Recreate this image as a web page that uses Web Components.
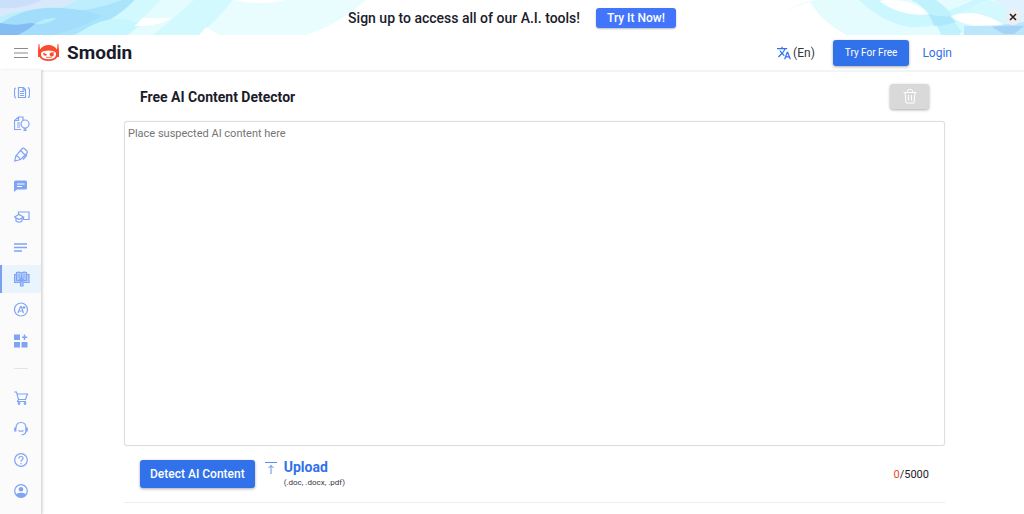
<!DOCTYPE html>
<html lang="en">
<head>
<meta charset="utf-8">
<meta name="viewport" content="width=device-width, initial-scale=1">
<title>Free AI Content Detector</title>
<style>
body {
  margin: 0;
  background: #fff;
  color: #1b1c2b;
  font-family: Roboto, "Liberation Sans", sans-serif;
  --blue: #3171ea;
  --icon: #7fa4f6;
}
</style>
</head>
<body>
<smodin-app>
  <promo-banner slot="banner">Sign up to access all of our A.I. tools!</promo-banner>
  <site-header slot="header">Smodin</site-header>
  <side-nav slot="nav"></side-nav>
  <content-detector>Free AI Content Detector</content-detector>
</smodin-app>

<script>
const define = (name, html, setup) => {
    const template = document.createElement("template");
    template.innerHTML = html;

    customElements.define(name, class extends HTMLElement {
        constructor() {
            super();
            this.attachShadow({ mode: "open" });
            this.shadowRoot.appendChild(template.content.cloneNode(true));
            if (setup) {
                setup(this.shadowRoot, this);
            }
        }
    });
};

define("smodin-app", `\
<style>
:host { display: flex; flex-direction: column; min-height: 100vh; }
.body { display: flex; flex: 1; }
main { display: flex; flex: 1; min-width: 0; border-top: 2px solid #f4f4f5; }
</style>
<slot name="banner"></slot>
<slot name="header"></slot>
<div class="body">
  <slot name="nav"></slot>
  <main><slot></slot></main>
</div>
`);

define("promo-banner", `\
<style>
:host {
  display: flex;
  align-items: center;
  justify-content: center;
  gap: 16px;
  height: 35px;
  position: relative;
  font-size: 14px;
  font-weight: 500;
  background: #fff;
}
.art { position: absolute; top: 0; height: 100%; z-index: 0; }
.left { left: 0; }
.right { right: 0; }
span { position: relative; }
a {
  position: relative;
  padding: 0 11px;
  border-radius: 3px;
  background: #4275fb;
  color: #fff;
  font-size: 12px;
  line-height: 20px;
  text-decoration: none;
  box-shadow: 0 1px 2px #0004;
}
button {
  position: absolute;
  right: 3px;
  top: 9px;
  display: flex;
  align-items: center;
  justify-content: center;
  width: 16px;
  height: 16px;
  padding: 0;
  border: 0;
  border-radius: 50%;
  background: #eeeef1;
}
</style>
<svg class="art left" width="366" height="35" viewBox="0 0 366 35" aria-hidden="true">
  <path fill="#e9fdff" d="M0 0h366q-30 26-60 35H0z"/>
  <path fill="#d2f9fe" d="M0 0h233q-16 20-34 35H0z"/>
  <path fill="#e5fcff" d="M160 0h34q-22 20-41 35H125q20-18 35-35z"/>
  <path fill="#bdeefd" d="M0 0h135q-20 22-60 35H0z"/>
  <path fill="#d7e9fb" d="M0 0h78q-12 8-30 9Q20 9 0 17z"/>
  <path fill="#cbdffa" d="M0 0h42q-20 10-42 8z"/>
  <path fill="#a9e4fc" d="M60 12q34-1 62-12h12q-22 24-62 35H28z"/>
  <path fill="#a2ddfb" d="M0 24q25-18 60-16 25 1 42 8-20 12-50 19H0z"/>
  <path fill="#84bcf4" d="M0 23q15 3 24 1 9-2 11 0-8 7-17 11H0z"/>
  <path fill="#b8edfd" d="M35 24q10-7 22-6-10 7-22 6z"/>
  <path fill="#c8f6fe" d="M80 32q20-14 40-13 14 1 20 6l-12 10H75z"/>
  <path fill="#fff" d="M142 18h29q-10 8-37 8 5-3 8-8z"/>
  <path fill="#fff" d="M199 35q4-4 7-8l13 8zM233 0h53q-23 6-53 0z"/>
</svg>
<svg class="art right" width="250" height="35" viewBox="0 0 250 35" aria-hidden="true">
  <path fill="#e5fcff" d="M12 11Q24 3 42 0h208v35H72Q46 20 36 2 24 5 12 11z"/>
  <path fill="#ccf7fe" d="M85 0h22q20 14 42 15 24-1 50-15h18q-18 5-35 17-22 12-48 10Q108 22 85 0z"/>
  <path fill="#c0f2fd" d="M137 0h25q10 7 17 16 7 8 14 10l-8 9h-18q-9-25-30-35z"/>
  <path fill="#d3f9fe" d="M176 16q18-6 40-16l34 14v21h-60q-7-10-14-19z"/>
  <path fill="#fff" d="M105 1q10-2 25 0 18 4 23 13-26 3-48-13zM177 16q24-8 48 6 10 5-5 4-30 2-43-10z"/>
  <path fill="#a5e4fc" d="M154 14q10 3 22 2l6 6q-12 4-22 4-2-6-6-12z" opacity=".7"/>
  <path fill="#dff2fd" d="M220 0h30v20q-16-10-30-20z"/>
  <path fill="#aedcfb" d="M190 26q20 0 35-1l25-3v13h-60z" opacity=".65"/>
  <path fill="#9bcaf7" d="M218 27q14-2 32-1l-10 8h-10z" opacity=".7"/>
</svg>
<span><slot></slot></span>
<a href="#signup">Try It Now!</a>
<button aria-label="Close">
  <svg width="8" height="8" viewBox="0 0 8 8" stroke="#222" stroke-width="1.6"><path d="M1 1l6 6M7 1L1 7"/></svg>
</button>
`);

define("site-header", `\
<style>
:host {
  display: flex;
  align-items: center;
  height: 35px;
  padding: 0 72px 0 14px;
  background: #fff;
}
svg { display: block; }
button { padding: 0; border: 0; background: none; cursor: pointer; }
.logo {
  display: flex;
  align-items: center;
  gap: 8px;
  margin: 0 auto 0 10px;
  color: inherit;
  font-size: 19px;
  font-weight: 700;
  text-decoration: none;
}
.lang {
  display: flex;
  align-items: center;
  gap: 2px;
  margin-right: 18px;
  color: #33363f;
  font-family: inherit;
  font-size: 12px;
}
.try {
  margin-right: 13px;
  padding: 0 12px;
  border-radius: 3px;
  background: var(--blue);
  color: #fff;
  font-size: 10px;
  line-height: 26px;
  text-decoration: none;
  box-shadow: 0 1px 3px #0005;
}
.login { color: var(--blue); font-size: 12px; text-decoration: none; }
</style>
<button aria-label="Menu">
  <svg width="14" height="12" viewBox="0 0 14 12" stroke="#8b8b8b"><path d="M0 1.5h14M0 6h14M0 10.5h14"/></svg>
</button>
<a class="logo" href="#home">
  <svg width="21" height="17" viewBox="0 0 21 17">
    <path fill="#fb4a2c" d="M0 7L.6 0h.8L2 5.500Q5 1 10.500 1T19 5.500L19.600 0h.8L21 7v6h-1.600Q17 17 10.500 17T1.600 13H0z"/>
    <path fill="#fff" d="M3 9.500Q3.500 7 6.500 7q4-.8 8 0Q17.500 7 18 9.500 18.300 13 15 14.500q-4.500 1.500-9 0Q2.700 13 3 9.500z"/>
    <path fill="#fb4a2c" d="M5 8.500l4 2q-.7 1.500-2.300 1.100Q5.200 11 5 8.500z"/>
    <circle cx="13.800" cy="10.400" r="2" fill="#fb4a2c"/>
    <path d="M11.500 10.200L16.500 7.800M8 13.200q3 .6 6-.2" fill="none" stroke="#fb4a2c" stroke-width=".8"/>
  </svg>
  <slot></slot>
</a>
<button class="lang" aria-label="Language">
  <svg width="14" height="14" viewBox="1 1 22 22" fill="#3171ea"><path d="M12.870 15.070l-2.540-2.510.03-.03A17.520 17.520 0 0 0 14.070 6H17V4h-7V2H8v2H1v2h11.170C11.500 7.920 10.440 9.750 9 11.350 8.070 10.320 7.300 9.190 6.690 8h-2c.73 1.630 1.730 3.170 2.980 4.560l-5.090 5.020L4 19l5-5 3.110 3.110.76-2.040zM18.500 10h-2L12 22h2l1.120-3h4.750L21 22h2l-4.500-12zm-2.620 7l1.620-4.330L19.120 17h-3.240z"/></svg>
  <span>(En)</span>
</button>
<a class="try" href="#signup">Try For Free</a>
<a class="login" href="#login">Login</a>
`);

// 16x16 line icons, stroked with currentColor
const icons = {
    rewrite: `<path d="M4.500 2.500h5l2 2v8h-7zM9 2.500V5h2.500M6 6.500h4M6 8.500h4M6 10.500h4M2 3Q.5 3 .5 5v5q0 2.500 1.500 2.500L1 13M14 12.500q1.500 0 1.500-2.500V5q0-2-1.500-2l1-.5"/>`,
    plagiarism: `<path d="M7 13.500H.5v-9L4.500 1H9v3M4.500 1v3.500H.5M3 7h3M3 9h3M3 11h3"/><circle cx="11" cy="8" r="4"/><path d="M10.200 12V14.500h1.600v-2.500"/>`,
    writer: `<path d="M.8 14l1-5 6-7q1.200-1.300 2.500-.5L13 4q.8 1.200-.2 2.500L6.500 12.500zM6.500 3.500l4.500 4.500M2 9q3 0 4 4M9 12.500l4-4.500"/>`,
    chat: `<path fill="currentColor" stroke="none" d="M1.500 2.500h10q1.500 0 1.500 1.500v6q0 1.500-1.500 1.500H3L0 14V4q0-1.500 1.500-1.500z"/><path d="M3 6h7.500M3 8.500h5" stroke="#fff"/>`,
    tutor: `<path d="M4.500 6V3H15v7.500H9.500M.5 8l4.500-2.500L9.500 8 5 10.500zM2 9v3q3 2.500 6 0V9M9.500 8v3"/>`,
    summary: `<path d="M0 4h13M0 7.500h13M0 11h8" stroke-width="1.600"/>`,
    detector: `<path fill="currentColor" fill-opacity=".45" d="M.5 3.500h2v-2q3-1 5 .8 2-1.800 5-.8v2h2.500v8H10L9 12v3H6.500v-3l-1-.5h-5z"/><path d="M7.500 3.500v8M2.500 3.500v6q3-.5 5 1.500M12.500 3.500v6q-3-.5-5 1.500M4 4h2M4 6h2M9 4h2M9 6h2M5.500 8.500l2-2 2 2-2 2z"/>`,
    grader: `<circle cx="7" cy="7.500" r="6.500"/><path d="M4 11l2.500-6.500h.8L9.500 11M4.800 9h4M10 4v3M8.500 5.500h3"/>`,
    apps: `<path fill="currentColor" stroke="none" d="M0 1.500h6v5.500H0zM0 9h6v5.500H0zM7.500 9h6v5.500h-6z"/><path d="M10.500 1.500v5.500M8 4.200h5.200" stroke-width="1.500"/>`,
    cart: `<path d="M0 2h2.500l2 7.500h7L13.500 4H3M4.500 9.500l-1 2H12"/><circle cx="5" cy="13.500" r=".8"/><circle cx="11" cy="13.500" r=".8"/>`,
    support: `<path d="M2 7Q2 1.500 7 1.500T12 7v2.500Q12 13.500 7.500 14M4.500 9.500Q7 11 9.500 9.500"/><path d="M1.300 6.500v4M12.700 6.500v4" stroke-width="2.200"/>`,
    help: `<circle cx="7" cy="8" r="6.300"/><path d="M5 6.500q0-2 2-2t2 1.800Q9 7.500 7.600 8.200 7 8.500 7 9.700M7 11v1.200"/>`,
    account: `<circle cx="7" cy="8" r="6.300"/><circle cx="7" cy="6.200" r="2.300" fill="currentColor" stroke="none"/><path fill="currentColor" stroke="none" d="M2 11Q7 8.300 12 11 10.500 14.500 7 14.500T2 11z"/>`,
};

define("side-nav", `\
<style>
:host {
  display: block;
  box-sizing: border-box;
  width: 42px;
  background: #fbfbfc;
  border-right: 1px solid #dcdcdc;
  box-shadow: 1px 0 2px #0002;
  z-index: 1;
}
nav { display: flex; flex-direction: column; gap: 3px; padding-top: 9px; }
hr { width: 14px; margin: 10px 14px 12px; border: 0; border-top: 1px solid #e4e4e4; }
</style>
<nav></nav>
`, (root) => {
    const nav = root.querySelector("nav");
    const groups = [
        ["rewrite", "plagiarism", "writer", "chat", "tutor", "summary", "detector", "grader", "apps"],
        ["cart", "support", "help", "account"],
    ];
    groups.forEach((group, i) => {
        if (i > 0) {
            nav.append(document.createElement("hr"));
        }
        for (const name of group) {
            const item = document.createElement("nav-item");
            item.setAttribute("icon", name);
            item.toggleAttribute("active", name === "detector");
            nav.append(item);
        }
    });
});

class NavItem extends HTMLElement {
    constructor() {
        super();
        this.attachShadow({ mode: "open" });
    }

    connectedCallback() {
        const name = this.getAttribute("icon");
        this.shadowRoot.innerHTML = `\
        <style>
        :host { display: block; }
        a {
          display: flex;
          align-items: center;
          box-sizing: border-box;
          height: 28px;
          padding-left: 12px;
          border-left: 2px solid transparent;
          color: var(--icon);
        }
        :host([active]) a { border-color: #7c9ff2; background: #eaf4fd; }
        svg { fill: none; stroke: currentColor; stroke-width: 1.2; }
        </style>
        <a href="#${name}" aria-label="${name}">
          <svg width="16" height="16" viewBox="0 0 16 16">${icons[name]}</svg>
        </a>
        `;
    }
}

customElements.define("nav-item", NavItem);

define("content-detector", `\
<style>
:host {
  display: flex;
  flex: 1;
  flex-direction: column;
  min-width: 0;
  padding: 0 79px 11px 82px;
}
.bar { display: flex; align-items: center; padding: 0 16px; }
.top { height: 49px; }
.bottom { height: 56px; border-bottom: 1px solid #eee; }
h1 { margin: 0 auto 0 0; font-size: 14px; font-weight: 700; }
button { border: 0; border-radius: 3px; font-family: inherit; box-shadow: 0 1px 3px #0005; }
.clear {
  display: flex;
  align-items: center;
  justify-content: center;
  width: 39px;
  height: 25px;
  background: #d9d9d9;
}
textarea {
  flex: 1;
  box-sizing: border-box;
  width: 100%;
  min-height: 160px;
  padding: 4px 3px;
  border: 1px solid #dedede;
  border-radius: 3px;
  outline: 0;
  resize: none;
  color: inherit;
  font-family: inherit;
  font-size: 11px;
  line-height: 16px;
  box-shadow: 0 0 1px #0002;
}
textarea::placeholder { color: #757575; }
.detect {
  height: 28px;
  padding: 0 10px;
  background: var(--blue);
  color: #fff;
  font-size: 12px;
  font-weight: 500;
}
.upload {
  display: flex;
  gap: 7px;
  margin: 0 auto 0 10px;
  color: var(--blue);
  text-decoration: none;
}
.upload svg { margin-top: 4px; }
.upload b { display: block; font-size: 14px; line-height: 18px; }
.upload small { display: block; color: #33363f; font-size: 8px; line-height: 14px; }
.count { font-size: 11px; }
.count span { color: #f0432c; }
</style>
<div class="bar top">
  <h1><slot></slot></h1>
  <button class="clear" aria-label="Clear text" disabled>
    <svg width="14" height="15" viewBox="0 0 14 15" fill="none" stroke="#fff"><path d="M.5 3.500h13M2 3.500l1 10.500h8l1-10.500M4.500 3V1.500L6 .5h2l1.500 1V3M5.500 6v5.500M8.500 6v5.500"/></svg>
  </button>
</div>
<textarea aria-label="Content" placeholder="Place suspected AI content here"></textarea>
<div class="bar bottom">
  <button class="detect">Detect AI Content</button>
  <a class="upload" href="#upload">
    <svg width="12" height="12" viewBox="0 0 12 12" fill="none" stroke="#3171ea" stroke-width=".8"><path d="M0 .5h12M6 12V3.500M3.500 6L6 3.500 8.500 6"/></svg>
    <span><b>Upload</b><small>(.doc, .docx, .pdf)</small></span>
  </a>
  <div class="count"><span>0</span>/5000</div>
</div>
`, (root) => {
    const textarea = root.querySelector("textarea");
    const count = root.querySelector(".count span");
    const clear = root.querySelector(".clear");
    const update = () => {
        count.textContent = textarea.value.length;
        clear.disabled = textarea.value === "";
    };

    textarea.addEventListener("input", update);
    clear.addEventListener("click", () => {
        textarea.value = "";
        update();
    });
});
</script>
</body>
</html>
